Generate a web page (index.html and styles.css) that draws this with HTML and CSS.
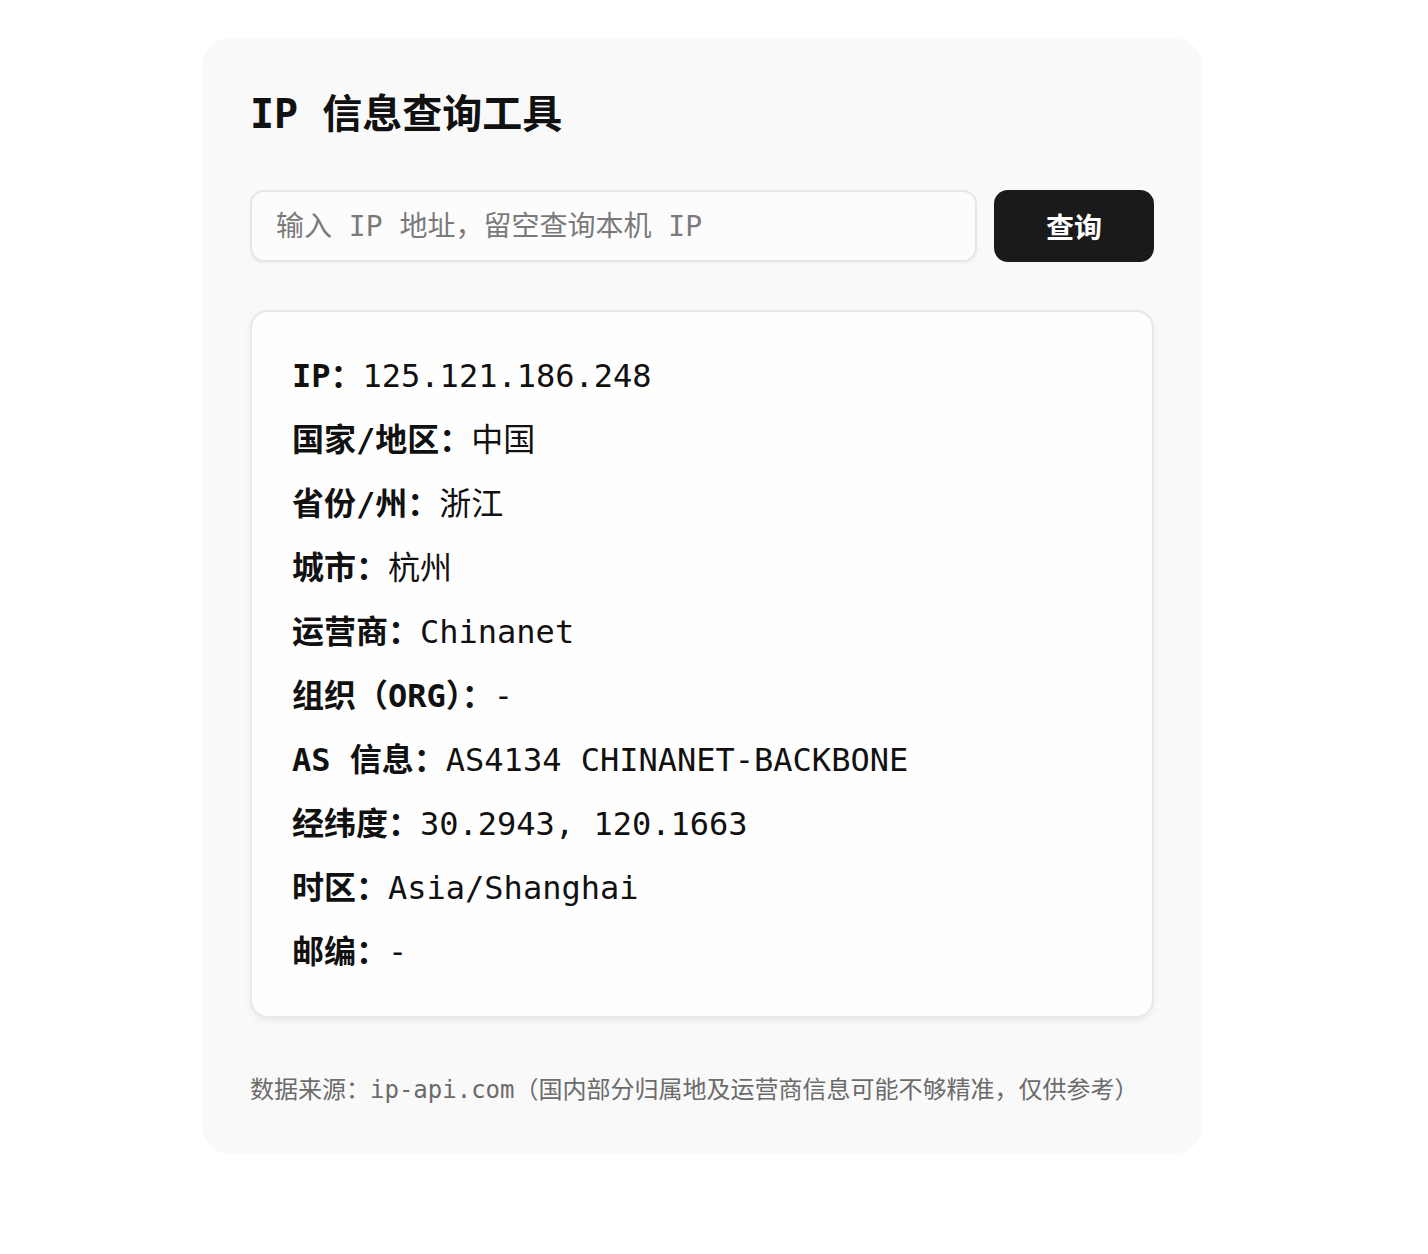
FILE: index.html
```html
<!DOCTYPE html>
<html lang="zh-CN">
<head>
<meta charset="utf-8">
<title>IP 信息查询工具</title>
<link rel="stylesheet" href="styles.css">
</head>
<body>
  <main class="panel">
    <h1 class="title">IP 信息查询工具</h1>

    <form class="search">
      <input class="search-input" type="text" placeholder="输入 IP 地址，留空查询本机 IP">
      <button class="search-btn" type="button">查询</button>
    </form>

    <section class="result">
      <p class="row"><span class="label">IP：</span>125.121.186.248</p>
      <p class="row"><span class="label">国家/地区：</span>中国</p>
      <p class="row"><span class="label">省份/州：</span>浙江</p>
      <p class="row"><span class="label">城市：</span>杭州</p>
      <p class="row"><span class="label">运营商：</span>Chinanet</p>
      <p class="row"><span class="label">组织（ORG）：</span>-</p>
      <p class="row"><span class="label">AS 信息：</span>AS4134 CHINANET-BACKBONE</p>
      <p class="row"><span class="label">经纬度：</span>30.2943, 120.1663</p>
      <p class="row"><span class="label">时区：</span>Asia/Shanghai</p>
      <p class="row"><span class="label">邮编：</span>-</p>
    </section>

    <p class="source">数据来源：ip-api.com（国内部分归属地及运营商信息可能不够精准，仅供参考）</p>
  </main>
</body>
</html>
```

FILE: styles.css
```css
* {
  box-sizing: border-box;
}

html, body {
  margin: 0;
  background: #ffffff;
}

body {
  padding: 38px 0 100px 202px;
  font-family: "DejaVu Sans Mono", "Noto Sans CJK SC", monospace;
  color: #111111;
}

.panel {
  width: 1000px;
  background: #f9f9f9;
  border-radius: 28px;
  padding: 48px 48px 46px 48px;
}

.title {
  margin: 0;
  font-size: 40px;
  line-height: 56px;
  font-weight: 700;
  color: #111111;
}

.search {
  display: flex;
  gap: 17px;
  margin-top: 48px;
}

.search-input {
  flex: 1;
  height: 72px;
  padding: 0 24px;
  font-family: inherit;
  font-size: 28px;
  color: #111111;
  background: #fcfcfc;
  border: 2px solid #e6e6e6;
  border-radius: 14px;
  box-shadow: 0 2px 3px rgba(0, 0, 0, 0.04);
  outline: none;
}

.search-input::placeholder {
  color: #7a7a7a;
}

.search-btn {
  width: 160px;
  height: 72px;
  font-family: inherit;
  font-size: 28px;
  font-weight: 700;
  color: #ffffff;
  background: #1a1a1a;
  border: none;
  border-radius: 14px;
  cursor: pointer;
}

.result {
  margin-top: 48px;
  background: #fefefe;
  border: 2px solid #e8e8e8;
  border-radius: 18px;
  padding: 40px;
  box-shadow: 0 3px 6px rgba(0, 0, 0, 0.06);
}

.row {
  margin: 0 0 16px 0;
  font-size: 32px;
  line-height: 48px;
  color: #111111;
}

.row:last-child {
  margin-bottom: 0;
}

.label {
  font-weight: 700;
}

.source {
  margin: 54px 0 0 0;
  font-size: 24px;
  line-height: 36px;
  color: #6b6b6b;
}
```
